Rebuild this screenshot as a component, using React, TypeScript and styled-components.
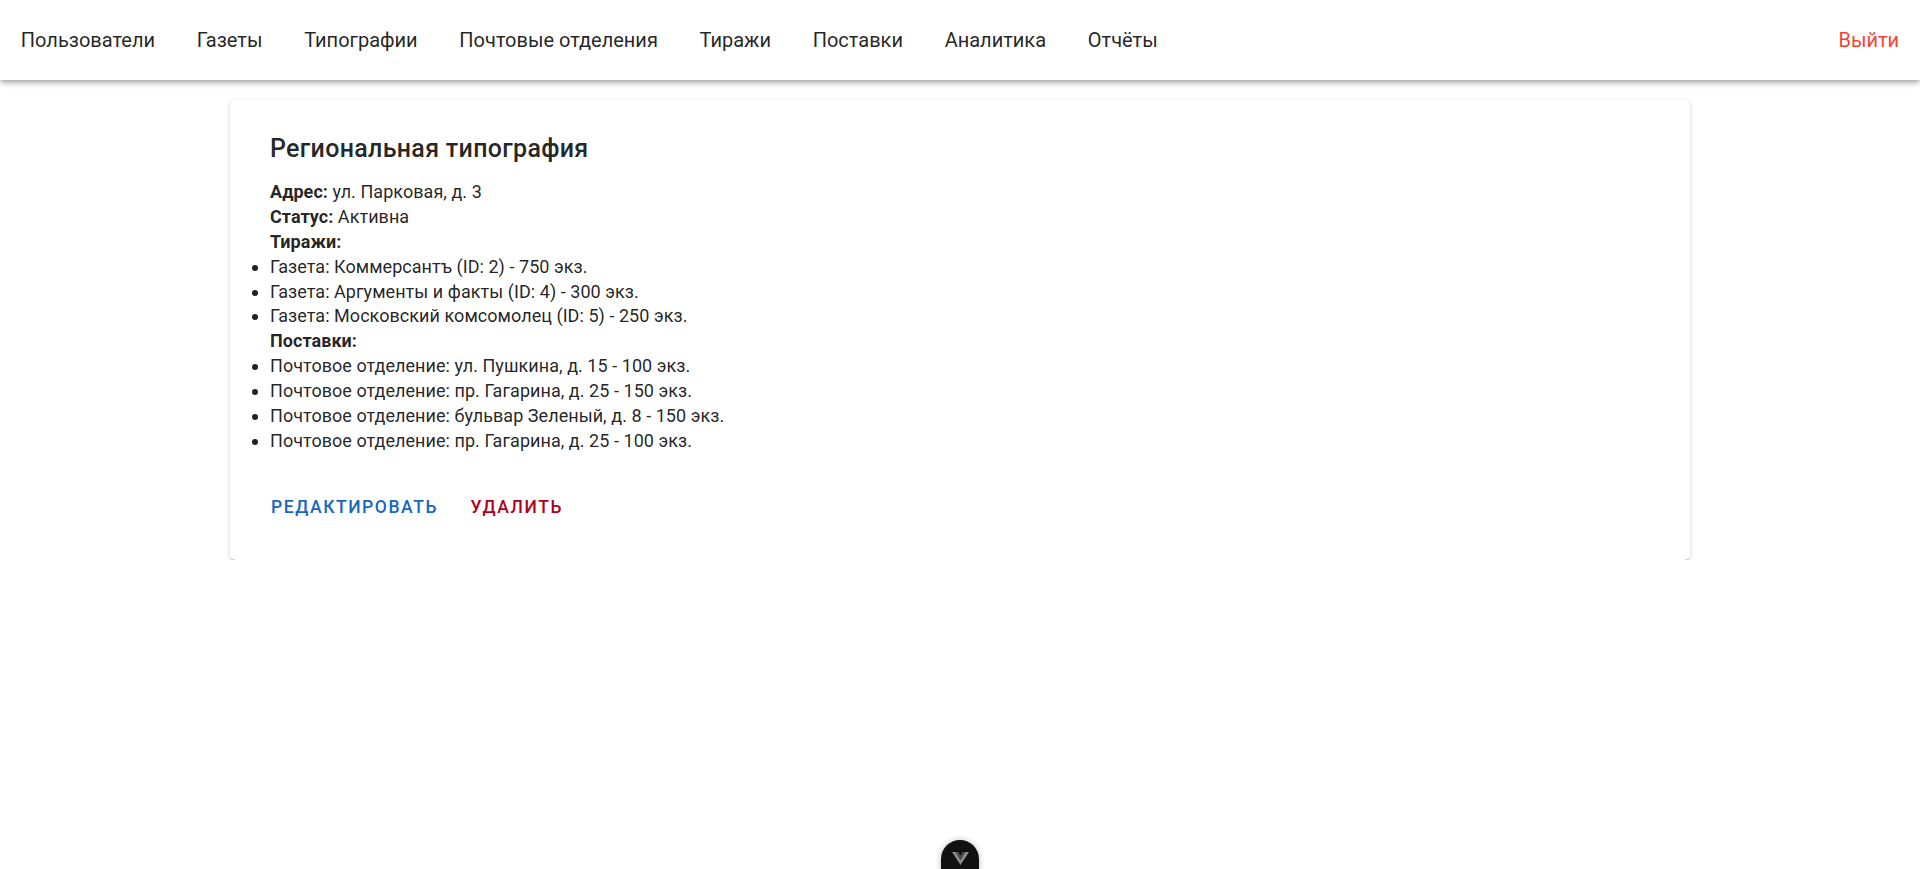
import styled, { createGlobalStyle } from "styled-components";

const GlobalStyle = createGlobalStyle`
  html, body {
    margin: 0;
    padding: 0;
    background: #ffffff;
    font-family: Roboto, "Liberation Sans", sans-serif;
    color: rgba(0, 0, 0, 0.87);
  }
`;

const AppBar = styled.header`
  height: 80px;
  display: flex;
  align-items: center;
  background: #fff;
  box-shadow: 0 2px 4px -1px rgba(0, 0, 0, 0.2), 0 4px 5px 0 rgba(0, 0, 0, 0.14),
    0 1px 10px 0 rgba(0, 0, 0, 0.12);
  position: relative;
  z-index: 2;
`;

const NavLinks = styled.nav`
  display: flex;
  align-items: center;
  flex: 1 1 auto;
`;

const NavLink = styled.a<{ $danger?: boolean }>`
  display: flex;
  align-items: center;
  height: 80px;
  padding: 0 20.85px;
  font-size: 20px;
  line-height: 1;
  color: ${(p) => (p.$danger ? "#f44336" : "rgba(0, 0, 0, 0.87)")};
  text-decoration: none;
  cursor: pointer;
  white-space: nowrap;
`;

const Main = styled.main`
  padding-top: 20px;
`;

const Container = styled.div`
  width: 1460px;
  margin: 0 auto;
`;

const Card = styled.section`
  background: #fff;
  border-radius: 5px;
  padding: 33px 40px 31px;
  box-shadow: 0 3px 1px -2px rgba(0, 0, 0, 0.2), 0 2px 2px 0 rgba(0, 0, 0, 0.14),
    0 1px 5px 0 rgba(0, 0, 0, 0.12);
`;

const Title = styled.h2`
  margin: 0 0 15px;
  font-size: 25px;
  line-height: 32px;
  font-weight: 500;
  letter-spacing: 0.31px;
`;

const Info = styled.div`
  font-size: 18px;
  line-height: 24.88px;
  letter-spacing: 0.05px;
`;

const Line = styled.div``;

const Label = styled.b`
  font-weight: 700;
`;

const List = styled.ul`
  margin: 0;
  padding: 0;
  list-style: disc outside;
`;

const Actions = styled.div`
  display: flex;
  gap: 12.5px;
  margin: 31px 0 0 -9px;
`;

const ActionButton = styled.button<{ $tone: "primary" | "error" }>`
  height: 44px;
  padding: 0 10px;
  border: none;
  background: transparent;
  font-family: Roboto, "Liberation Sans", sans-serif;
  font-size: 17.5px;
  font-weight: 500;
  letter-spacing: 1.56px;
  text-transform: uppercase;
  color: ${(p) => (p.$tone === "primary" ? "#1867c0" : "#b00020")};
  cursor: pointer;
`;

const DevtoolsTab = styled.div`
  position: fixed;
  left: 941px;
  top: 840px;
  width: 38px;
  height: 48px;
  border-radius: 19px 19px 0 0;
  background: #111;
  display: flex;
  justify-content: center;
  padding-top: 12px;
  box-sizing: border-box;
  box-shadow: 0 0 6px rgba(0, 0, 0, 0.25);
`;

const navItems = [
  "Пользователи",
  "Газеты",
  "Типографии",
  "Почтовые отделения",
  "Тиражи",
  "Поставки",
  "Аналитика",
  "Отчёты",
];

const editions = [
  "Газета: Коммерсантъ (ID: 2) - 750 экз.",
  "Газета: Аргументы и факты (ID: 4) - 300 экз.",
  "Газета: Московский комсомолец (ID: 5) - 250 экз.",
];

const deliveries = [
  "Почтовое отделение: ул. Пушкина, д. 15 - 100 экз.",
  "Почтовое отделение: пр. Гагарина, д. 25 - 150 экз.",
  "Почтовое отделение: бульвар Зеленый, д. 8 - 150 экз.",
  "Почтовое отделение: пр. Гагарина, д. 25 - 100 экз.",
];

export default function App() {
  return (
    <>
      <GlobalStyle />
      <AppBar>
        <NavLinks>
          {navItems.map((item) => (
            <NavLink key={item}>{item}</NavLink>
          ))}
        </NavLinks>
        <NavLink $danger>Выйти</NavLink>
      </AppBar>

      <Main>
        <Container>
          <Card>
            <Title>Региональная типография</Title>
            <Info>
              <Line>
                <Label>Адрес:</Label> ул. Парковая, д. 3
              </Line>
              <Line>
                <Label>Статус:</Label> Активна
              </Line>
              <Line>
                <Label>Тиражи:</Label>
              </Line>
              <List>
                {editions.map((e) => (
                  <li key={e}>{e}</li>
                ))}
              </List>
              <Line>
                <Label>Поставки:</Label>
              </Line>
              <List>
                {deliveries.map((d, i) => (
                  <li key={i}>{d}</li>
                ))}
              </List>
            </Info>
            <Actions>
              <ActionButton type="button" $tone="primary">
                Редактировать
              </ActionButton>
              <ActionButton type="button" $tone="error">
                Удалить
              </ActionButton>
            </Actions>
          </Card>
        </Container>
      </Main>

      <DevtoolsTab>
        <svg width="17" height="13" viewBox="0 0 17 13">
          <polygon points="0,0 4,0 8.5,8 13,0 17,0 8.5,13" fill="#8a8a8a" />
          <polygon points="4,0 6.5,0 8.5,3.5 10.5,0 13,0 8.5,8" fill="#4a4a4a" />
        </svg>
      </DevtoolsTab>
    </>
  );
}
